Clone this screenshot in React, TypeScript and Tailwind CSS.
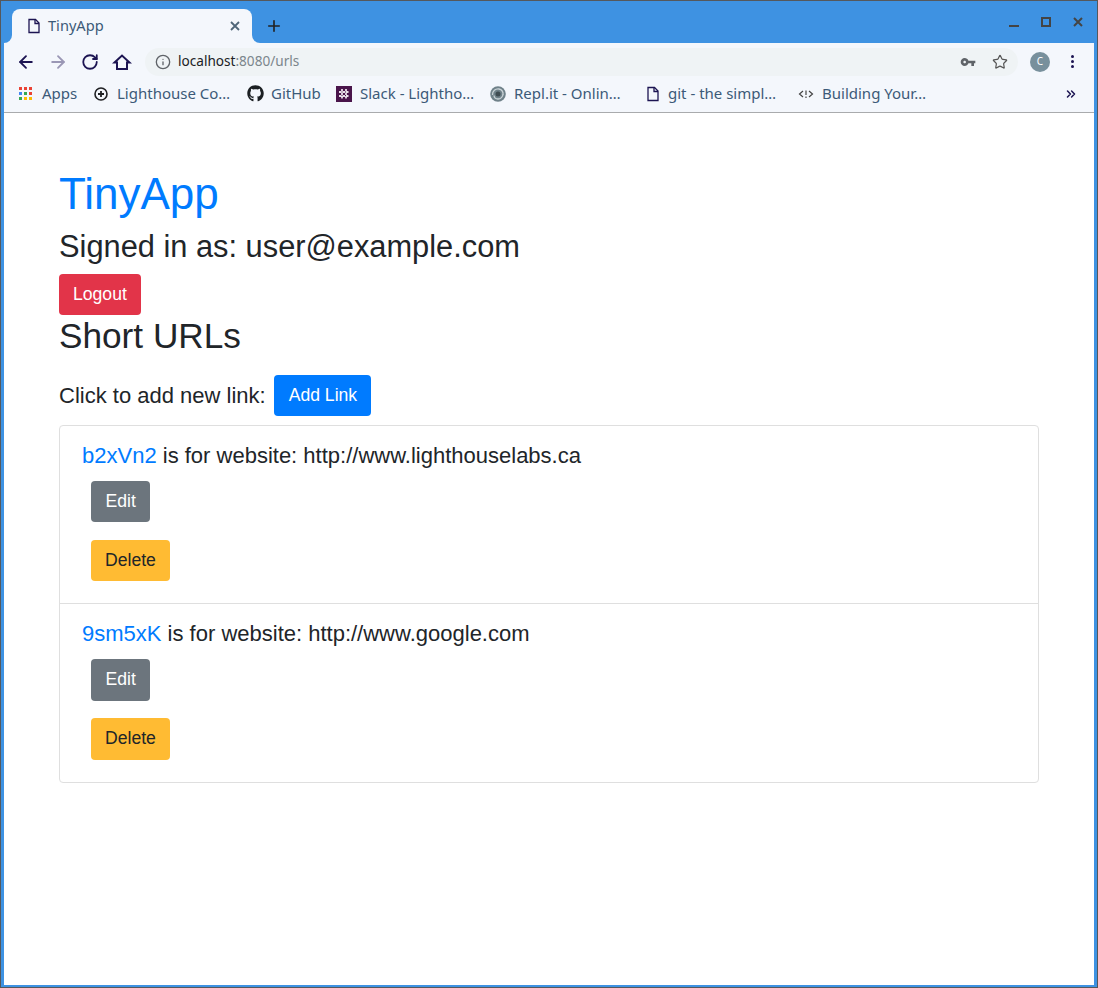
import { ArrowLeft, ArrowRight, ChevronsRight, Info, Plus, RotateCw, Star } from "lucide-react";
import { FaGithub } from "react-icons/fa";

const bookmarks = [
  { label: "Lighthouse Co…", icon: <LighthouseIcon />, width: "w-[154px]", gap: "gap-[8px]" },
  { label: "GitHub", icon: <FaGithub size={17} className="text-[#1b1f23]" />, width: "w-[89px]", gap: "gap-[7px]" },
  { label: "Slack - Lightho…", icon: <SlackIcon />, width: "w-[154px]", gap: "gap-[8px]" },
  { label: "Repl.it - Onlin…", icon: <ReplIcon />, width: "w-[155px]", gap: "gap-[8px]" },
  { label: "git - the simpl…", icon: <PageIcon />, width: "w-[153px]", gap: "gap-[7px]" },
  { label: "Building Your…", icon: <CodeIcon />, width: "w-[140px]", gap: "gap-[8px]" },
];

function PageIcon() {
  return (
    <svg width="16" height="16" viewBox="0 0 16 16" fill="none" stroke="#1c1452" strokeWidth="1.3">
      <path d="M3 1.5h6.5L13 5v9.5H3z" />
      <path d="M9 1.5V5.5h4" />
    </svg>
  );
}

function LighthouseIcon() {
  return (
    <svg width="16" height="16" viewBox="0 0 16 16" fill="none" stroke="#202124" strokeWidth="1.6">
      <circle cx="8" cy="8" r="6" />
      <path d="M8 5v6M5 8h6" strokeWidth="1.8" />
    </svg>
  );
}

function SlackIcon() {
  return (
    <svg width="16" height="16" viewBox="0 0 16 16">
      <rect width="16" height="16" fill="#4a154b" />
      <path d="M6 3v10M10 3v10M3 6h10M3 10h10" stroke="#e8dfe8" strokeWidth="1.8" strokeDasharray="2.5 1" />
    </svg>
  );
}

function ReplIcon() {
  return (
    <svg width="16" height="16" viewBox="0 0 16 16" fill="none">
      <circle cx="8" cy="8" r="7.8" fill="#6f8189" />
      <path d="M2.500 9c-.2-4 3-6.500 6.500-6 2.800.5 4.500 3 4 5.500" stroke="#c9d2d6" strokeWidth="1.300" />
      <path d="M13 8c0 3-2.500 5-5 5-2.200 0-3.800-1.500-4-3.500" stroke="#c9d2d6" strokeWidth="1.300" />
      <circle cx="8" cy="8" r="2.500" fill="#3f4c52" />
    </svg>
  );
}

function CodeIcon() {
  return (
    <svg width="16" height="16" viewBox="0 0 16 16" fill="none" stroke="#444" strokeWidth="1.200">
      <path d="M5 5 1.500 8 5 11M11 5l3.500 3L11 11M8 4.500v4.500M8 10.500v1.500" />
    </svg>
  );
}

function AppsIcon() {
  const colors = ["#ea4335", "#ea4335", "#ea4335", "#4285f4", "#34a853", "#ea4335", "#34a853", "#fbbc05", "#fbbc05"];
  return (
    <div className="grid grid-cols-3 gap-[2px] w-[13px] h-[13px]">
      {colors.map((c, idx) => (
        <span key={idx} style={{ backgroundColor: c }} className="block w-[3px] h-[3px]" />
      ))}
    </div>
  );
}

function CloseGlyph({ size, width, color }: { size: number; width: number; color: string }) {
  return (
    <svg width={size} height={size} viewBox={`0 0 ${size} ${size}`} stroke={color} strokeWidth={width} fill="none">
      <path d={`M1 1 ${size - 1} ${size - 1}M${size - 1} 1 1 ${size - 1}`} />
    </svg>
  );
}

function Chrome() {
  return (
    <div className="font-['Noto_Sans',sans-serif]">
      {/* tab strip */}
      <div className="h-[42px] flex items-end pl-[8px] relative">
        <div className="relative w-[240px] h-[34px] bg-[#f4f7fc] rounded-t-[8px] flex items-center pl-[14px] pr-[12px]">
          <div className="absolute -left-[8px] bottom-0 w-[8px] h-[8px] bg-[#f4f7fc]">
            <div className="w-full h-full bg-[#3e92e2] rounded-br-[8px]" />
          </div>
          <div className="absolute -right-[8px] bottom-0 w-[8px] h-[8px] bg-[#f4f7fc]">
            <div className="w-full h-full bg-[#3e92e2] rounded-bl-[8px]" />
          </div>
          <PageIcon />
          <span className="ml-[6px] text-[14.6px] text-[#3c5a78] flex-1">TinyApp</span>
          <CloseGlyph size={10} width={1.8} color="#4f6578" />
        </div>
        <Plus size={18} strokeWidth={2.2} className="ml-[13px] mb-[8px] text-[#222]" />
        <div className="absolute right-[11px] top-[16px] flex items-center gap-[22px]">
          <div className="w-[10px] h-[10px] flex items-end"><div className="w-full h-[2px] bg-[#444]" /></div>
          <div className="w-[10px] h-[10px] border-2 border-[#444]" />
          <CloseGlyph size={10} width={2} color="#444" />
        </div>
      </div>

      {/* toolbar */}
      <div className="h-[37px] bg-[#f4f7fc] flex items-center pl-[12px] pr-[12px]">
        <ArrowLeft size={20} strokeWidth={2.2} className="text-[#1c1452]" />
        <ArrowRight size={20} strokeWidth={2.2} className="ml-[12px] text-[#9a97b5]" />
        <RotateCw size={18} strokeWidth={2.4} className="ml-[13px] text-[#1c1452]" />
        <svg width="20" height="20" viewBox="0 0 20 20" fill="none" stroke="#1c1452" strokeWidth="2" className="ml-[13px]">
          <path d="M2.500 10.500 10 3.500l7.500 7H15v6.500H5v-6.500z" />
        </svg>
        <div className="ml-[13px] w-[873px] h-[28px] rounded-full bg-[#eff3f5] flex items-center pl-[10px] pr-[10px]">
          <Info size={16} strokeWidth={2} className="text-[#5f6368]" />
          <span className="ml-[7px] text-[13.6px] text-[#202124] flex-1">
            localhost<span className="text-[#7b868c]">:8080/urls</span>
          </span>
          <svg width="16" height="16" viewBox="0 0 24 24" fill="#5f6368">
            <path d="M12.650 10C11.830 7.670 9.610 6 7 6c-3.310 0-6 2.690-6 6s2.690 6 6 6c2.610 0 4.830-1.670 5.650-4H17v4h4v-4h2v-4H12.650zM7 14c-1.100 0-2-.9-2-2s.9-2 2-2 2 .9 2 2-.9 2-2 2z" />
          </svg>
          <Star size={16} strokeWidth={1.8} className="ml-[16px] text-[#555]" />
        </div>
        <div className="ml-[12px] w-[20px] h-[20px] rounded-full bg-[#78909c] flex items-center justify-center text-[10px] text-white">C</div>
        <div className="ml-[21px] flex flex-col gap-[2px]">
          <span className="block w-[3px] h-[3px] rounded-full bg-[#1c1452]" />
          <span className="block w-[3px] h-[3px] rounded-full bg-[#1c1452]" />
          <span className="block w-[3px] h-[3px] rounded-full bg-[#1c1452]" />
        </div>
      </div>

      {/* bookmarks */}
      <div className="h-[33px] pb-[5px] bg-[#f4f7fc] border-b border-[#a9abad] flex items-center pl-[15px] text-[15px] text-[#3c5a78]">
        <div className="w-[74px] flex items-center gap-[10px]">
          <AppsIcon />
          <span>Apps</span>
        </div>
        {bookmarks.map((b, idx) => (
          <div key={idx} className={`${b.width} ${b.gap} flex items-center whitespace-nowrap`}>
            {b.icon}
            <span>{b.label}</span>
          </div>
        ))}
        <ChevronsRight size={14} strokeWidth={2.6} className="ml-auto mr-[16px] text-[#1c1452]" />
      </div>
    </div>
  );
}

function UrlItem({ id, url, last }: { id: string; url: string; last?: boolean }) {
  // the two rows round differently in the screenshot (page was at 110% zoom)
  const btn = last ? "h-[42px]" : "h-[41px]";
  return (
    <div className={`px-[22px] pt-[13px] ${last ? "pb-[22px]" : "pb-[21.6px] border-b border-[#dfdfdf]"}`}>
      <div className="text-[22px] leading-[33px]">
        <a className="text-[#007bff]">{id}</a> is for website: {url}
      </div>
      <div className={`pl-[9px] mt-[9px] flex flex-col items-start ${last ? "gap-[17px]" : "gap-[18px]"}`}>
        <button className={`${btn} px-[14.5px] rounded-[4px] bg-[#6c757d] text-white text-[17.6px]`}>Edit</button>
        <button className={`${btn} px-[14px] rounded-[4px] bg-[#ffbb33] text-[#212529] text-[17.6px]`}>Delete</button>
      </div>
    </div>
  );
}

export default function App() {
  return (
    <div className="w-[1098px] h-[988px] bg-[#3e92e2] border border-[#55585c] px-[3px] pb-[2px] flex flex-col overflow-hidden">
      <Chrome />
      <main className="flex-1 bg-white pl-[55px] pr-[55px] pt-[54px] text-[#212529] font-['Liberation_Sans',sans-serif]">
        <h1 className="text-[44px] leading-[53px] text-[#007bff]">TinyApp</h1>
        <h3 className="mt-[8px] text-[30.8px] leading-[37px]">Signed in as: user@example.com</h3>
        <button className="mt-[9px] block h-[41px] px-[14px] rounded-[4px] bg-[#e23449] text-white text-[17.6px]">Logout</button>
        <h3 className="text-[35.2px] leading-[42px]">Short URLs</h3>
        <div className="mt-[18px] flex items-center gap-[8px] text-[22px]">
          <span>Click to add new link:</span>
          <button className="h-[41px] pl-[15px] pr-[14px] rounded-[4px] bg-[#007bff] text-white text-[17.6px]">Add Link</button>
        </div>
        <div className="mt-[9px] w-[980px] border border-[#dfdfdf] rounded-[4px]">
          <UrlItem id="b2xVn2" url="http://www.lighthouselabs.ca" />
          <UrlItem id="9sm5xK" url="http://www.google.com" last />
        </div>
      </main>
    </div>
  );
}
